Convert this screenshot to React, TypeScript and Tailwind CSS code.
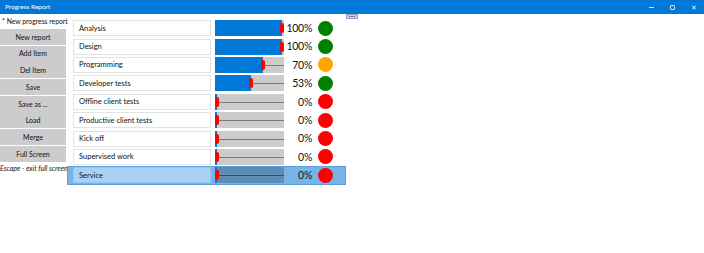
import React from "react";

const items: { name: string; pct: number; color: string }[] = [
  { name: "Analysis", pct: 100, color: "#008000" },
  { name: "Design", pct: 100, color: "#008000" },
  { name: "Programming", pct: 70, color: "#ffa500" },
  { name: "Developer tests", pct: 53, color: "#008000" },
  { name: "Offline client tests", pct: 0, color: "#ff0000" },
  { name: "Productive client tests", pct: 0, color: "#ff0000" },
  { name: "Kick off", pct: 0, color: "#ff0000" },
  { name: "Supervised work", pct: 0, color: "#ff0000" },
  { name: "Service", pct: 0, color: "#ff0000" },
];

const buttons = ["New report", "Add Item", "Del Item", "Save", "Save as ...", "Load", "Merge", "Full Screen"];

function Slider({ pct, selected }: { pct: number; selected: boolean }) {
  const travel = 65;
  const pos = (pct / 100) * travel;
  return (
    <div className={`relative w-[69px] h-[16px] ${selected ? "bg-[#5d8db5]" : "bg-[#cccccc]"}`}>
      <div className="absolute left-0 top-0 h-full bg-[#0078d7]" style={{ width: pos + 2 }} />
      <div
        className={`absolute right-0 top-[8px] h-[1px] ${selected ? "bg-[#2f4f6f]" : "bg-[#7a7a7a]"}`}
        style={{ left: pos + 2 }}
      />
      <div className="absolute top-[3px] h-[10px] w-[4px] rounded-[2px] bg-[#ff0000]" style={{ left: pos }} />
    </div>
  );
}

export default function App() {
  return (
    <div className="w-[704px] h-[253px] bg-white overflow-hidden relative" style={{ fontFamily: 'Lato, "Noto Sans", sans-serif' }}>
      <div className="h-[14px] bg-[#0078d7] flex items-center text-white">
        <span className="pl-[5px] text-[6.5px] leading-none">Progress Report</span>
        <div className="ml-auto flex items-center h-full">
          <div className="w-[21px] flex justify-center"><div className="w-[5px] h-[1px] bg-white/80" /></div>
          <div className="w-[21px] flex justify-center"><div className="w-[5px] h-[5px] border border-white/80 rounded-[1px]" /></div>
          <div className="w-[21px] flex justify-center text-[7px] leading-none text-white/90">✕</div>
        </div>
      </div>
      <div className="absolute left-[346px] top-[14px] w-[12px] h-[5px] bg-[#c8cce0] border border-[#9aa0c0] flex items-center justify-center z-20">
        <div className="w-[6px] h-[1px] bg-[#7a80a0]" />
      </div>
      <div className="flex">
        <div className="w-[67px] shrink-0 flex flex-col">
          <div className="h-[15px] pl-[2px] pt-[1px] text-[6.8px] leading-[13px] text-[#111] whitespace-nowrap">* New progress report</div>
          <div className="flex flex-col gap-[0.7px] w-[66px]">
            {buttons.map((b) => (
              <div key={b} className="h-[16px] bg-[#cccccc] flex items-center justify-center text-[7px] text-[#111]">
                {b}
              </div>
            ))}
          </div>
          <div className="text-[7px] italic text-[#111] whitespace-nowrap leading-[12px]">
            Escape - exit full screen
          </div>
        </div>
        <div className="relative z-10 flex flex-col pt-[5px] w-[279px]">
          {items.map((it, i) => {
            const sel = i === items.length - 1;
            return (
              <div
                key={it.name}
                className={`h-[18.4px] flex items-center ${sel ? "bg-[#78b4e8] border border-[#5fa0dc] pl-[5px]" : "pl-[6px]"}`}
              >
                <div
                  className={`w-[138px] h-[16px] flex items-center pl-[5px] text-[7.5px] text-[#111] border ${
                    sel ? "bg-[#a9d1f3] border-[#98c4ec]" : "bg-white border-[#e3e3e3]"
                  }`}
                >
                  {it.name}
                </div>
                <div className="ml-[4px]">
                  <Slider pct={it.pct} selected={sel} />
                </div>
                <div className="w-[28px] text-right text-[10.5px] tracking-[-0.3px] leading-none text-[#111]">{it.pct}%</div>
                <div className="ml-[6px] w-[15px] h-[15px] rounded-full" style={{ backgroundColor: it.color }} />
              </div>
            );
          })}
        </div>
      </div>
    </div>
  );
}
